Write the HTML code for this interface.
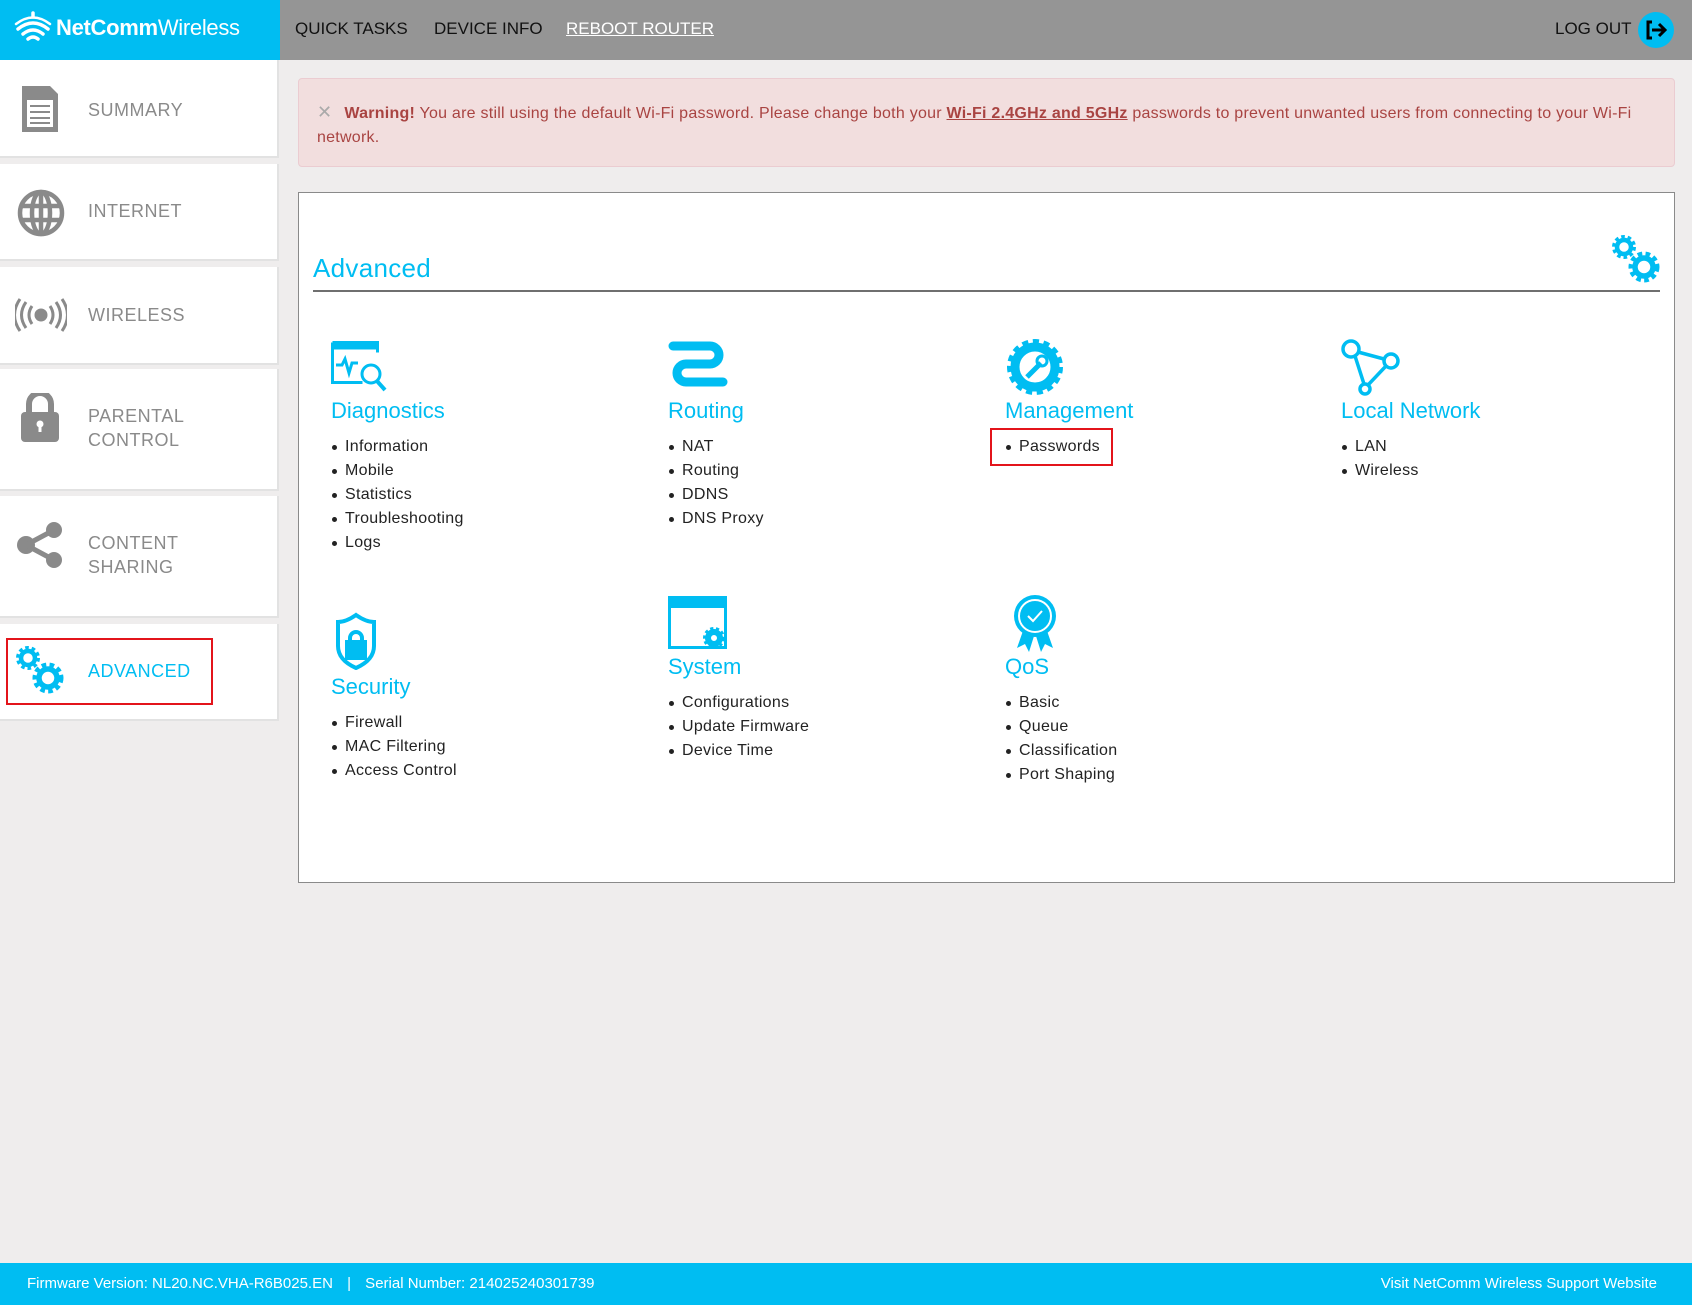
<!DOCTYPE html>
<html><head><meta charset="utf-8"><style>
*{margin:0;padding:0;box-sizing:border-box}
body{width:1692px;height:1305px;background:#efeded;font-family:"Liberation Sans",sans-serif;position:relative;overflow:hidden}
.a{position:absolute}
#hdr{left:0;top:0;width:1692px;height:60px;background:#959595}
#logo{left:0;top:0;width:280px;height:60px;background:#00bdf2}
.nav{top:19px;font-size:17px;color:#111}
.side{left:0;width:279px;background:#fff;border-bottom:2px solid #e2e2e2;border-right:2px solid #e2e2e2}
.sl{left:88px;font-size:18px;color:#8a8a8a;line-height:24px;letter-spacing:0.5px}
#warn{left:298px;top:78px;width:1377px;height:89px;background:#f2dede;border:1px solid #ebccd1;border-radius:4px;color:#a94442;font-size:16px;line-height:24px;padding:21px 16px 0 18px;letter-spacing:0.25px}
#panel{left:298px;top:192px;width:1377px;height:691px;background:#fff;border:1px solid #8a8a8a}
.t{font-size:22px;color:#00bdf2}
ul{list-style:none}
li{font-size:16px;color:#222;height:24px;line-height:24px;padding-left:14px;position:relative;letter-spacing:0.3px}
li:before{content:"";position:absolute;left:1px;top:10px;width:5px;height:5px;border-radius:50%;background:#222}
#foot{left:0;top:1263px;width:1692px;height:42px;background:#00bdf2;color:#fff;font-size:15px;line-height:42px}
.red{border:2px solid #e3141b}
</style></head><body>
<div id="hdr" class="a"></div>
<div id="logo" class="a">
<svg class="a" style="left:14px;top:11px" width="38" height="36" viewBox="0 0 38 36" fill="none" stroke="#fff" stroke-width="3.5" stroke-linecap="round"><path d="M19 2v4"/><path d="M4 18q15-12 30 0"/><path d="M9 23q10-8 20 0"/><path d="M14 28q5-4 10 0"/><path d="M2 13q17-13 34 0" stroke-width="2.5"/></svg>
<div class="a" style="left:56px;top:15px;font-size:22px;color:#fff;letter-spacing:-0.3px"><b>NetComm</b>Wireless</div>
</div>
<div class="a nav" style="left:295px">QUICK TASKS</div>
<div class="a nav" style="left:434px">DEVICE INFO</div>
<div class="a nav" style="left:566px;color:#fff;text-decoration:underline">REBOOT ROUTER</div>
<div class="a nav" style="left:1555px">LOG OUT</div>
<div class="a" style="left:1638px;top:12px;width:36px;height:36px;border-radius:50%;background:#00bdf2"></div>
<svg class="a" style="left:1645px;top:19px" width="22" height="22" viewBox="0 0 22 22" fill="none" stroke="#000" stroke-width="3"><path d="M7 3H3v16h4"/><path d="M7 11h12M14 5l6 6-6 6"/></svg>

<div class="a side" style="top:60px;height:98px"></div>
<div class="a side" style="top:164px;height:97px"></div>
<div class="a side" style="top:267px;height:98px"></div>
<div class="a side" style="top:369px;height:122px"></div>
<div class="a side" style="top:496px;height:122px"></div>
<div class="a side" style="top:624px;height:97px"></div>

<svg class="a" style="left:19px;top:84px" width="42" height="50" viewBox="0 0 42 50"><path d="M3 2h28l8 8v38H3z" fill="#8a8a8a"/><path d="M8 16h26v27H8z" fill="#fff"/><path d="M11 22h20M11 28h20M11 34h20M11 39h20" stroke="#8a8a8a" stroke-width="2"/></svg>
<div class="a sl" style="top:98px">SUMMARY</div>
<svg class="a" style="left:16px;top:188px" width="50" height="50" viewBox="0 0 50 50" fill="none" stroke="#8a8a8a" stroke-width="4.5"><circle cx="25" cy="25" r="21"/><ellipse cx="25" cy="25" rx="9" ry="21"/><path d="M25 4v42M5 18h40M5 32h40"/></svg>
<div class="a sl" style="top:199px">INTERNET</div>
<svg class="a" style="left:15px;top:297px" width="52" height="36" viewBox="0 0 52 36" fill="none" stroke="#8a8a8a" stroke-width="3"><circle cx="26" cy="18" r="5" fill="#8a8a8a"/><path d="M17 9q-6 9 0 18M35 9q6 9 0 18M11 5q-9 13 0 26M41 5q9 13 0 26M5 2q-11 16 0 32M47 2q11 16 0 32"/></svg>
<div class="a sl" style="top:303px">WIRELESS</div>
<svg class="a" style="left:19px;top:393px" width="42" height="50" viewBox="0 0 42 50"><path d="M10 20V11a11 11 0 0 1 22 0v9" fill="none" stroke="#8a8a8a" stroke-width="6"/><rect x="2" y="19" width="38" height="30" rx="4" fill="#8a8a8a"/><circle cx="21" cy="31" r="3.5" fill="#fff"/><rect x="19.5" y="31" width="3" height="8" fill="#fff"/></svg>
<div class="a sl" style="top:404px">PARENTAL<br>CONTROL</div>
<svg class="a" style="left:16px;top:520px" width="48" height="50" viewBox="0 0 48 50" fill="#8a8a8a"><circle cx="38" cy="10" r="8"/><circle cx="38" cy="40" r="8"/><circle cx="10" cy="25" r="9"/><path d="M10 25L38 10M10 25l28 15" stroke="#8a8a8a" stroke-width="5"/></svg>
<div class="a sl" style="top:531px">CONTENT<br>SHARING</div>
<svg class="a" style="left:16px;top:646px" width="50" height="50" viewBox="0 0 50 50" fill="none" stroke="#00bdf2"><circle cx="12" cy="12" r="7" stroke-width="4.5"/><circle cx="12" cy="12" r="10" stroke-width="4" stroke-dasharray="3.5 2.8"/><circle cx="32" cy="32" r="9" stroke-width="5.5"/><circle cx="32" cy="32" r="13" stroke-width="5" stroke-dasharray="4.5 3.3"/></svg>
<div class="a sl" style="top:659px;color:#00bdf2">ADVANCED</div>
<div class="a red" style="left:6px;top:638px;width:207px;height:67px"></div>

<div id="warn" class="a"><span style="color:#aaa;font-size:18px;margin-right:12px">✕</span><b>Warning!</b> You are still using the default Wi-Fi password. Please change both your <b style="text-decoration:underline">Wi-Fi 2.4GHz and 5GHz</b> passwords to prevent unwanted users from connecting to your Wi-Fi<br>network.</div>

<div id="panel" class="a"></div>
<div class="a" style="left:313px;top:253px;font-size:26px;color:#00bdf2;letter-spacing:0.3px">Advanced</div>
<div class="a" style="left:313px;top:290px;width:1347px;height:2px;background:#6f6f6f"></div>
<svg class="a" style="left:1612px;top:235px" width="50" height="50" viewBox="0 0 50 50" fill="none" stroke="#00bdf2"><circle cx="12" cy="12" r="7" stroke-width="4.5"/><circle cx="12" cy="12" r="10" stroke-width="4" stroke-dasharray="3.5 2.8"/><circle cx="32" cy="32" r="9" stroke-width="5.5"/><circle cx="32" cy="32" r="13" stroke-width="5" stroke-dasharray="4.5 3.3"/></svg>

<svg class="a" style="left:331px;top:341px" width="60" height="52" viewBox="0 0 60 52" fill="none" stroke="#00bdf2" stroke-width="3"><path d="M1.5 1.5h45v10M1.5 1.5v40h30"/><path d="M1.5 5h45" stroke-width="7"/><path d="M5 24h6l3-6 4 14 3-10h6"/><circle cx="40" cy="33" r="9"/><path d="M46 40l8 9" stroke-width="4"/></svg>
<svg class="a" style="left:668px;top:341px" width="60" height="52" viewBox="0 0 60 52" fill="none" stroke="#00bdf2" stroke-width="9" stroke-linecap="round"><path d="M5 5h37a9 9 0 0 1 0 18H18a9 9 0 0 0 0 18h37"/></svg>
<svg class="a" style="left:1005px;top:337px" width="60" height="60" viewBox="0 0 60 60" fill="none" stroke="#00bdf2"><circle cx="30" cy="30" r="20" stroke-width="9"/><circle cx="30" cy="30" r="25" stroke-width="6" stroke-dasharray="6 4.5"/><path d="M22 40l14-14" stroke-width="5"/><circle cx="37" cy="24" r="5" stroke-width="3"/></svg>
<svg class="a" style="left:1341px;top:339px" width="60" height="58" viewBox="0 0 60 58" fill="none" stroke="#00bdf2" stroke-width="3.5"><circle cx="10" cy="10" r="8"/><circle cx="50" cy="22" r="7"/><circle cx="24" cy="50" r="5"/><path d="M17 13l26 7M14 17l9 28M45 27l-18 19"/></svg>

<div class="a t" style="left:331px;top:398px">Diagnostics</div>
<div class="a t" style="left:668px;top:398px">Routing</div>
<div class="a t" style="left:1005px;top:398px">Management</div>
<div class="a t" style="left:1341px;top:398px">Local Network</div>

<ul class="a" style="left:331px;top:435px"><li>Information</li><li>Mobile</li><li>Statistics</li><li>Troubleshooting</li><li>Logs</li></ul>
<ul class="a" style="left:668px;top:435px"><li>NAT</li><li>Routing</li><li>DDNS</li><li>DNS Proxy</li></ul>
<ul class="a" style="left:1005px;top:435px"><li>Passwords</li></ul>
<div class="a red" style="left:990px;top:428px;width:123px;height:38px"></div>
<ul class="a" style="left:1341px;top:435px"><li>LAN</li><li>Wireless</li></ul>

<svg class="a" style="left:335px;top:612px" width="42" height="58" viewBox="0 0 42 58" fill="none" stroke="#00bdf2" stroke-width="4"><path d="M21 3q10 7 18 7v24q0 14-18 22Q3 48 3 34V10q8 0 18-7z"/><rect x="12" y="30" width="18" height="16" fill="#00bdf2"/><path d="M15 31v-5a6 6 0 0 1 12 0v5"/></svg>
<svg class="a" style="left:668px;top:596px" width="60" height="54" viewBox="0 0 60 54" fill="none" stroke="#00bdf2" stroke-width="3"><rect x="1.5" y="1.5" width="56" height="50"/><path d="M1.5 7h56" stroke-width="10"/><circle cx="46" cy="42" r="6" stroke-width="6"/><circle cx="46" cy="42" r="9" stroke-width="4" stroke-dasharray="3 2.5"/></svg>
<svg class="a" style="left:1010px;top:592px" width="50" height="60" viewBox="0 0 50 60" fill="none" stroke="#00bdf2"><path d="M14 36L7 56l8-4 4 8 5-16M36 36l7 20-8-4-4 8-5-16" fill="#00bdf2" stroke="none"/><circle cx="25" cy="24" r="21" fill="#00bdf2" stroke="none"/><circle cx="25" cy="24" r="16" stroke="#fff" stroke-width="2"/><path d="M18 24l5 5 9-10" stroke="#fff" stroke-width="2"/></svg>

<div class="a t" style="left:331px;top:674px">Security</div>
<div class="a t" style="left:668px;top:654px">System</div>
<div class="a t" style="left:1005px;top:654px">QoS</div>
<ul class="a" style="left:331px;top:711px"><li>Firewall</li><li>MAC Filtering</li><li>Access Control</li></ul>
<ul class="a" style="left:668px;top:691px"><li>Configurations</li><li>Update Firmware</li><li>Device Time</li></ul>
<ul class="a" style="left:1005px;top:691px"><li>Basic</li><li>Queue</li><li>Classification</li><li>Port Shaping</li></ul>

<div id="foot" class="a"><span class="a" style="left:27px">Firmware Version: NL20.NC.VHA-R6B025.EN <span style="margin:0 10px">|</span> Serial Number: 214025240301739</span><span class="a" style="right:35px">Visit NetComm Wireless Support Website</span></div>
</body></html>
